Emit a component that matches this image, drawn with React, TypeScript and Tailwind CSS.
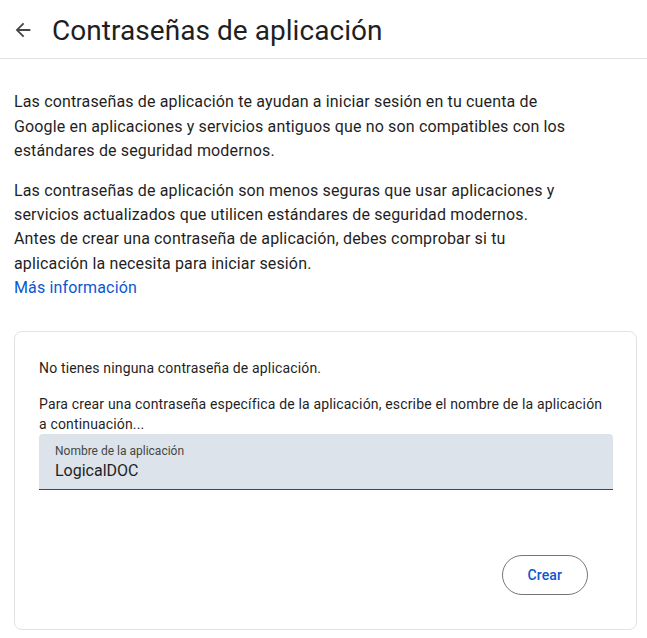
import React from "react";

export default function App() {
  return (
    <div className="w-[647px] h-[638px] bg-white text-[#1f1f1f] overflow-hidden" style={{ fontFamily: "Roboto, 'Noto Sans', sans-serif" }}>
      <header className="h-[59px] border-b border-[#e1e3e1] flex items-start pt-[13px]">
        <div className="w-[52px] flex justify-start pl-[12px] pt-[6px]">
          <svg width="22" height="22" viewBox="0 0 24 24" fill="#444746">
            <path d="M20 11H7.83l5.59-5.59L12 4l-8 8 8 8 1.41-1.41L7.83 13H20v-2z" />
          </svg>
        </div>
        <h1 className="text-[28px] leading-[36px] font-normal text-[#1f1f1f] tracking-[0.05px]">Contraseñas de aplicación</h1>
      </header>

      <div className="px-[14px] pt-[31px] w-[584px]">
        <p className="text-[16px] leading-[24.5px] text-[#1f1f1f] tracking-[0.15px]">
          Las contraseñas de aplicación te ayudan a iniciar sesión en tu cuenta de Google en aplicaciones y servicios antiguos que no son compatibles con los estándares de seguridad modernos.
        </p>
        <p className="mt-[15px] text-[16px] leading-[24.4px] text-[#1f1f1f] tracking-[0.15px]">
          Las contraseñas de aplicación son menos seguras que usar aplicaciones y servicios actualizados que utilicen estándares de seguridad modernos.
          <br />
          Antes de crear una contraseña de aplicación, debes comprobar si tu aplicación la necesita para iniciar sesión.
        </p>
        <a className="block text-[16px] leading-[24px] text-[#0b57d0] tracking-[0.15px]">Más información</a>
      </div>

      <div className="ml-[14px] mt-[31px] w-[623px] h-[299px] border border-[#e1e3e1] rounded-[8px] px-[24px] pt-[26px]">
        <p className="text-[14px] leading-[20px] text-[#1f1f1f] tracking-[0.16px]">No tienes ninguna contraseña de aplicación.</p>
        <p className="mt-[16px] text-[14px] leading-[20px] text-[#1f1f1f] tracking-[0.16px]">
          Para crear una contraseña específica de la aplicación, escribe el nombre de la aplicación a continuación...
        </p>
        <div className="w-[574px] h-[56px] bg-[#dde3ea] rounded-t-[4px] border-b border-[#444746] pl-[16px] pt-[9px] flex flex-col">
          <span className="text-[12px] leading-[16px] text-[#444746]">Nombre de la aplicación</span>
          <span className="text-[16px] leading-[24px] text-[#1f1f1f]">LogicalDOC</span>
        </div>
        <div className="flex justify-end pr-[24px] mt-[65px]">
          <button className="h-[40px] px-[25px] rounded-full border border-[#747775] text-[14px] font-medium text-[#0b57d0] tracking-[0.1px]">Crear</button>
        </div>
      </div>
    </div>
  );
}
